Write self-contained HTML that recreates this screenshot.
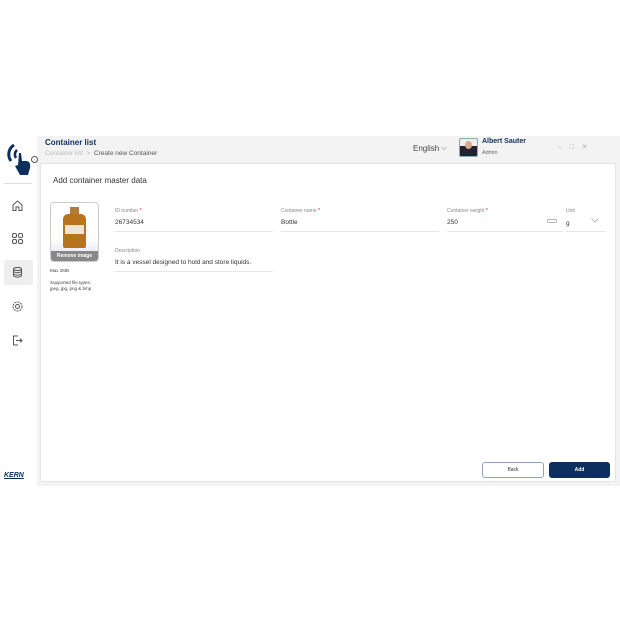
<!DOCTYPE html><html><head><style>
*{margin:0;padding:0;box-sizing:border-box}
body{width:620px;height:620px;background:#fff;font-family:"Liberation Sans",sans-serif;position:relative;overflow:hidden;color:#333}
.a{position:absolute}
.lbl{font-size:5px;color:#888}
.val{font-size:6.5px;color:#333}
.line{height:1px;background:#e6e6e6}
.ic{position:absolute;left:11px;width:13px;height:13px}
</style></head><body>
<div class="a" style="left:37px;top:136px;width:583px;height:350px;background:#f3f3f3"></div>
<svg class="a" style="left:5px;top:141px" width="30" height="36" viewBox="0 0 30 36"><path d="M9 4 A11 11 0 0 0 6 20" stroke="#0d2f5e" stroke-width="3" fill="none"/><path d="M12 9 A6 6 0 0 0 11 17" stroke="#0d2f5e" stroke-width="2.5" fill="none"/><path d="M14 12 L16 12 L17 20 L22 20 Q26 21 25 27 L23 34 L15 34 L10 25 L13 24 Z" fill="#0d2f5e"/></svg>
<div class="a" style="left:31px;top:156px;width:7px;height:7px;border:1px solid #555;border-radius:50%;background:#fff;font-size:4px;line-height:5px;text-align:center">›</div>
<div class="a" style="left:4px;top:183px;width:28px;height:1px;background:#ddd"></div>
<svg class="ic" style="top:199px" viewBox="0 0 13 13" fill="none" stroke="#555" stroke-width="1"><path d="M2 6 L6.5 2 L11 6 V11.5 H8 V8 H5 V11.5 H2 Z"/></svg>
<svg class="ic" style="top:232px" viewBox="0 0 13 13" fill="none" stroke="#555" stroke-width="1"><rect x="1.5" y="1.5" width="4" height="4" rx="1.5"/><rect x="7.5" y="1.5" width="4" height="4" rx="1.5"/><rect x="1.5" y="7.5" width="4" height="4" rx="1.5"/><rect x="7.5" y="7.5" width="4" height="4" rx="1.5"/></svg>
<div class="a" style="left:4px;top:260px;width:29px;height:25px;background:#eee;border-radius:3px"></div>
<svg class="ic" style="top:266px" viewBox="0 0 13 13" fill="none" stroke="#555" stroke-width="1"><ellipse cx="6.5" cy="3" rx="4" ry="1.5"/><path d="M2.5 3 V10 Q6.5 12.5 10.5 10 V3 M2.5 5.5 Q6.5 8 10.5 5.5 M2.5 8 Q6.5 10.5 10.5 8"/></svg>
<svg class="ic" style="top:300px" viewBox="0 0 13 13" fill="none" stroke="#555" stroke-width="1"><circle cx="6.5" cy="6.5" r="2"/><circle cx="6.5" cy="6.5" r="4.5" stroke-dasharray="2 1"/></svg>
<svg class="ic" style="top:334px" viewBox="0 0 13 13" fill="none" stroke="#555" stroke-width="1"><path d="M7 2 H2.5 V11 H7 M5 6.5 H11 M9 4.5 L11 6.5 L9 8.5"/></svg>
<div class="a" style="left:4px;top:472px;font-size:7px;font-weight:bold;font-style:italic;color:#0d2f5e;text-decoration:underline">KERN</div>
<div class="a" style="left:45px;top:138px;font-size:8px;font-weight:bold;color:#0d2f5e">Container list</div>
<div class="a" style="left:45px;top:150px;font-size:6.5px;color:#bbb">Container list &nbsp;&gt;&nbsp; <span style="color:#555">Create new Container</span></div>
<div class="a" style="left:413px;top:144px;font-size:8px;color:#444">English</div>
<svg class="a" style="left:441px;top:146px" width="6" height="5" viewBox="0 0 6 5"><path d="M0.5 1 L3 3.5 L5.5 1" stroke="#aaa" fill="none" stroke-width="0.7"/></svg>
<div class="a" style="left:459px;top:138px;width:19px;height:19px;border:1px solid #8aa;border-radius:2px;background:linear-gradient(#eee 40%,#223 40%)"><div style="width:7px;height:8px;background:#d9a98a;border-radius:50%;margin:2px auto"></div></div>
<div class="a" style="left:482px;top:138px;font-size:7px;color:#0d2f5e;font-weight:bold">Albert Sauter</div>
<div class="a" style="left:482px;top:150px;font-size:5.5px;color:#666">Admin</div>
<div class="a" style="left:558px;top:143px;font-size:7px;color:#aaa">–&nbsp;&nbsp;&nbsp;&nbsp;□&nbsp;&nbsp;&nbsp;&nbsp;✕</div>
<div class="a" style="left:40px;top:163px;width:576px;height:319px;background:#fff;border:1px solid #e3e3e3;border-radius:2px"></div>
<div class="a" style="left:53px;top:176px;font-size:8px;color:#333">Add container master data</div>
<div class="a" style="left:50px;top:202px;width:49px;height:60px;border:1px solid #ccc;border-radius:4px;overflow:hidden;background:linear-gradient(#fff 60%,#d8e0f0)">
<div style="position:absolute;left:19px;top:4px;width:9px;height:8px;background:#b07a40"></div>
<div style="position:absolute;left:12px;top:11px;width:23px;height:34px;background:#b8741c;border-radius:5px 5px 2px 2px"></div>
<div style="position:absolute;left:14px;top:22px;width:19px;height:9px;background:#eee5d0"></div>
<div style="position:absolute;left:0;bottom:0;width:100%;height:10px;background:#888;color:#fff;font-size:5px;text-align:center;line-height:10px;font-weight:bold">Remove image</div></div>
<div class="a lbl" style="left:50px;top:268px;color:#444;font-size:4.5px;line-height:6px">Max 2MB<br><br>Supported file types:<br>jpeg, jpg, png &amp; bmp</div>
<div class="a lbl" style="left:115px;top:208px">ID number <span style="color:red">*</span></div>
<div class="a val" style="left:115px;top:219px">26734534</div>
<div class="a line" style="left:115px;top:231px;width:158px"></div>
<div class="a lbl" style="left:281px;top:208px">Container name <span style="color:red">*</span></div>
<div class="a val" style="left:281px;top:219px">Bottle</div>
<div class="a line" style="left:281px;top:231px;width:158px"></div>
<div class="a lbl" style="left:447px;top:208px">Container weight <span style="color:red">*</span></div>
<div class="a val" style="left:447px;top:219px">250</div>
<div class="a" style="left:547px;top:219px;width:10px;height:4px;border:1px solid #bbb;border-radius:1px"></div>
<div class="a line" style="left:447px;top:231px;width:115px"></div>
<div class="a lbl" style="left:566px;top:208px">Unit</div>
<div class="a val" style="left:566px;top:220px">g</div>
<svg class="a" style="left:591px;top:218px" width="8" height="5" viewBox="0 0 8 5"><path d="M0.5 0.5 L4 4 L7.5 0.5" stroke="#999" fill="none" stroke-width="0.7"/></svg>
<div class="a line" style="left:566px;top:231px;width:40px"></div>
<div class="a lbl" style="left:115px;top:248px">Description</div>
<div class="a val" style="left:115px;top:259px">It is a vessel designed to hold and store liquids.</div>
<div class="a line" style="left:115px;top:271px;width:158px"></div>
<div class="a" style="left:482px;top:462px;width:62px;height:16px;border:1px solid #8ea3c0;border-radius:3px;font-size:5px;color:#333;text-align:center;line-height:14px">Back</div>
<div class="a" style="left:549px;top:462px;width:61px;height:16px;background:#0d2f5e;border-radius:3px;font-size:5px;color:#fff;font-weight:bold;text-align:center;line-height:16px">Add</div>
</body></html>
